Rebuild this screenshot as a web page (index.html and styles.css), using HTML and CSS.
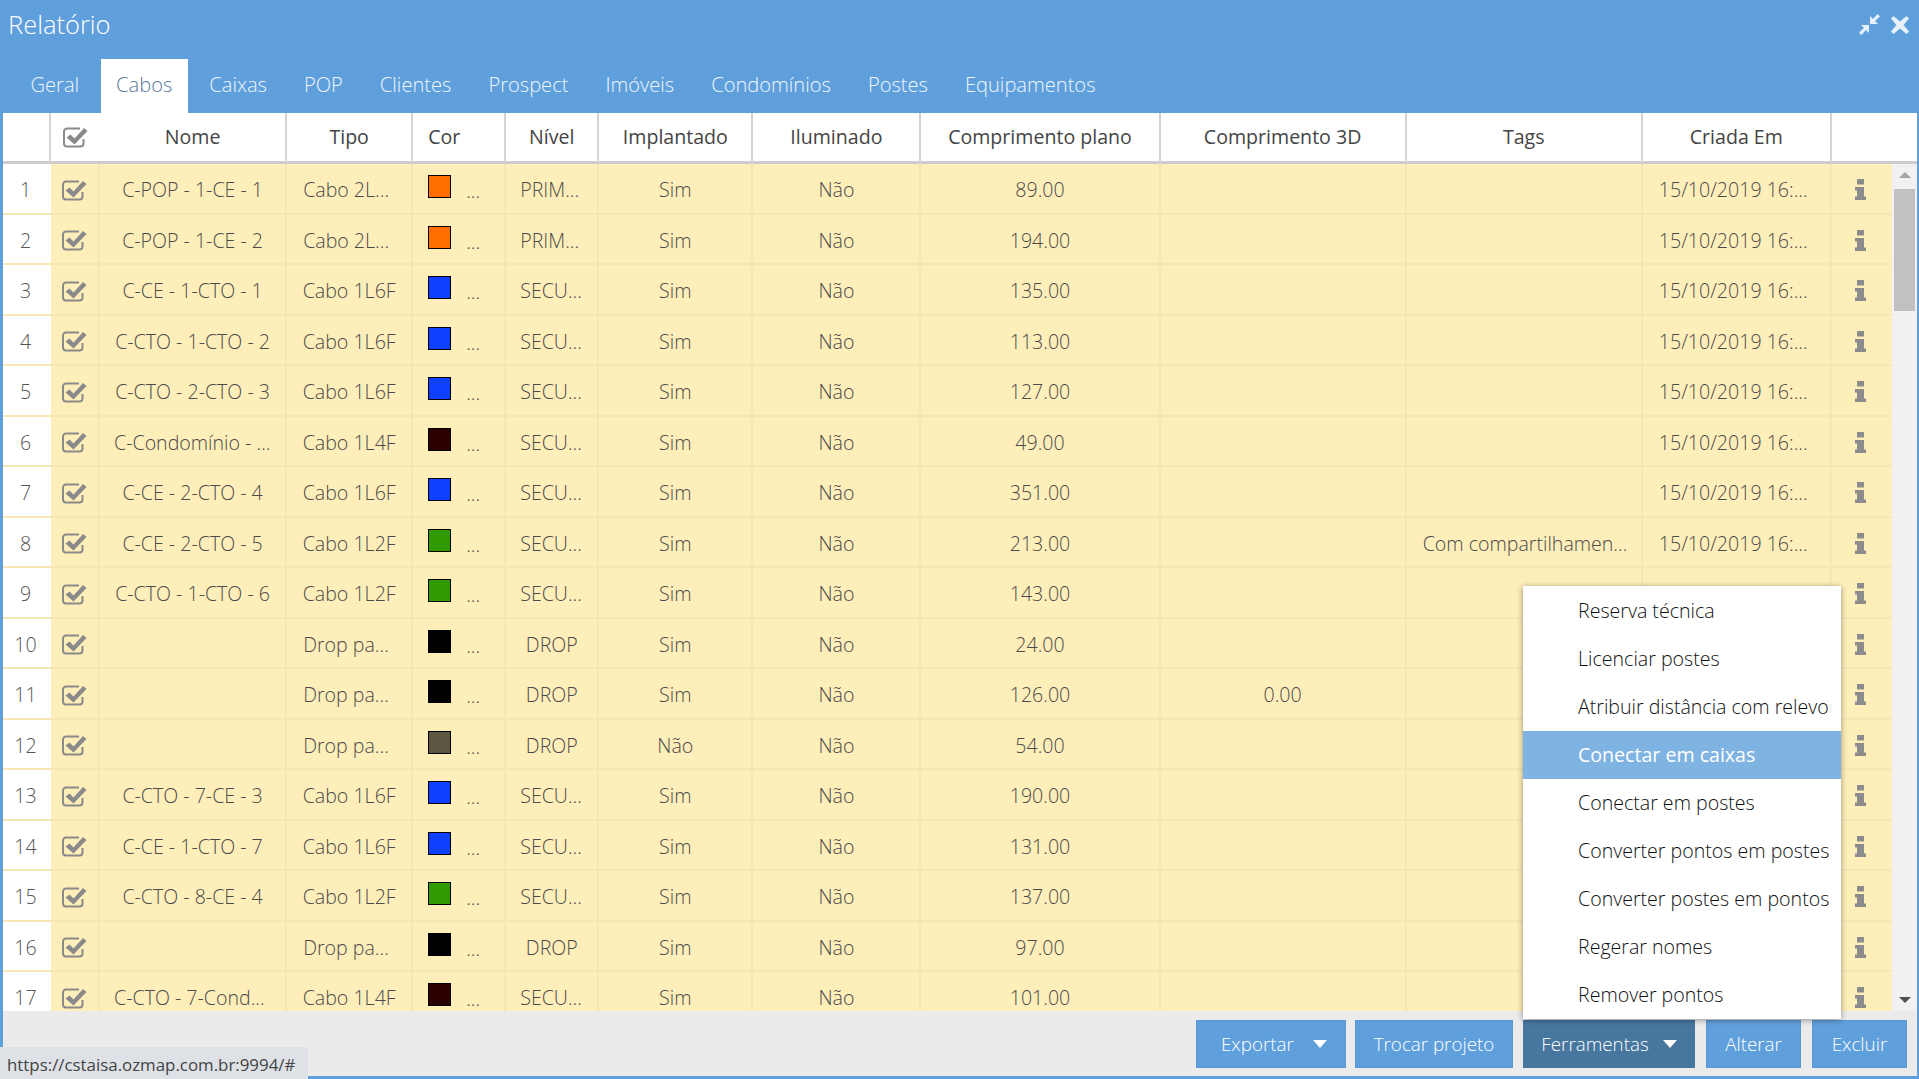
FILE: index.html
```html
<!DOCTYPE html>
<html lang="pt-BR">
<head>
<meta charset="utf-8">
<title>Relatório</title>
<link rel="stylesheet" href="styles.css">
</head>
<body>
<svg class="sprites" width="0" height="0">
  <symbol id="chk" viewBox="0 0 25 21">
    <path d="M20.500 12V16.500a3 3 0 0 1-3 3H4a3 3 0 0 1-3-3V4.500a3 3 0 0 1 3-3h13" fill="none" stroke="currentColor" stroke-width="2"/>
    <path d="M7.500 7.500l4 4L21 1l3.500 3L11.500 17.500 3.500 10.500z" fill="currentColor"/>
  </symbol>
  <symbol id="inf" viewBox="0 0 11 21">
    <path d="M2 0h7v5.500H2zM0 8h9v9.500h2V21H0v-3.500h2V11.500H0z" fill="currentColor"/>
  </symbol>
</svg>
<div class="window">
  <header class="titlebar">
    <h1 class="title">Relatório</h1>
    <div class="win-actions">
      <svg class="win-ico" viewBox="0 0 21 21"><path d="M10 11v8l-3-3-4.500 5L0 18.500 5 14 2 11zM11 10V2l3 3 4.500-5L21 2.500 16 7l3 3z" fill="currentColor"/></svg>
      <svg class="win-ico" viewBox="0 0 18 18"><path d="M2.500 0L9 5.500 15.500 0 18 2.500 12.500 9 18 15.500 15.500 18 9 12.500 2.500 18 0 15.500 5.500 9 0 2.500z" fill="currentColor"/></svg>
    </div>
  </header>
  <nav class="tabs">
    <a class="tab">Geral</a><a class="tab active">Cabos</a><a class="tab">Caixas</a><a class="tab">POP</a><a class="tab">Clientes</a><a class="tab">Prospect</a><a class="tab">Imóveis</a><a class="tab">Condomínios</a><a class="tab">Postes</a><a class="tab">Equipamentos</a>
  </nav>
  <table class="grid head">
    <colgroup><col class="c1"><col class="c2"><col class="c3"><col class="c4"><col class="c5"><col class="c6"><col class="c7"><col class="c8"><col class="c9"><col class="c10"><col class="c11"><col class="c12"><col class="c13h"></colgroup>
    <thead><tr>
      <th></th><th class="no-sep"><svg class="chk"><use href="#chk"/></svg></th><th>Nome</th><th>Tipo</th><th class="cor-h">Cor</th><th>Nível</th><th>Implantado</th><th>Iluminado</th><th>Comprimento plano</th><th>Comprimento 3D</th><th>Tags</th><th>Criada Em</th><th class="no-sep"></th>
    </tr></thead>
  </table>
  <div class="body-row">
    <div class="rows">
      <table class="grid">
        <colgroup><col class="c1"><col class="c2"><col class="c3"><col class="c4"><col class="c5"><col class="c6"><col class="c7"><col class="c8"><col class="c9"><col class="c10"><col class="c11"><col class="c12"><col class="c13"></colgroup>
        <tbody>
          <tr><td class="num">1</td><td><svg class="chk"><use href="#chk"/></svg></td><td>C-POP - 1-CE - 1</td><td class="cut">Cabo 2L...</td><td class="cor"><i class="sw orange"></i><span>...</span></td><td class="cut">PRIM...</td><td>Sim</td><td>Não</td><td>89.00</td><td></td><td></td><td class="cut">15/10/2019 16:...</td><td><svg class="inf"><use href="#inf"/></svg></td></tr>
          <tr><td class="num">2</td><td><svg class="chk"><use href="#chk"/></svg></td><td>C-POP - 1-CE - 2</td><td class="cut">Cabo 2L...</td><td class="cor"><i class="sw orange"></i><span>...</span></td><td class="cut">PRIM...</td><td>Sim</td><td>Não</td><td>194.00</td><td></td><td></td><td class="cut">15/10/2019 16:...</td><td><svg class="inf"><use href="#inf"/></svg></td></tr>
          <tr><td class="num">3</td><td><svg class="chk"><use href="#chk"/></svg></td><td>C-CE - 1-CTO - 1</td><td>Cabo 1L6F</td><td class="cor"><i class="sw blue"></i><span>...</span></td><td class="cut">SECU...</td><td>Sim</td><td>Não</td><td>135.00</td><td></td><td></td><td class="cut">15/10/2019 16:...</td><td><svg class="inf"><use href="#inf"/></svg></td></tr>
          <tr><td class="num">4</td><td><svg class="chk"><use href="#chk"/></svg></td><td>C-CTO - 1-CTO - 2</td><td>Cabo 1L6F</td><td class="cor"><i class="sw blue"></i><span>...</span></td><td class="cut">SECU...</td><td>Sim</td><td>Não</td><td>113.00</td><td></td><td></td><td class="cut">15/10/2019 16:...</td><td><svg class="inf"><use href="#inf"/></svg></td></tr>
          <tr><td class="num">5</td><td><svg class="chk"><use href="#chk"/></svg></td><td>C-CTO - 2-CTO - 3</td><td>Cabo 1L6F</td><td class="cor"><i class="sw blue"></i><span>...</span></td><td class="cut">SECU...</td><td>Sim</td><td>Não</td><td>127.00</td><td></td><td></td><td class="cut">15/10/2019 16:...</td><td><svg class="inf"><use href="#inf"/></svg></td></tr>
          <tr><td class="num">6</td><td><svg class="chk"><use href="#chk"/></svg></td><td class="cut">C-Condomínio - ...</td><td>Cabo 1L4F</td><td class="cor"><i class="sw wine"></i><span>...</span></td><td class="cut">SECU...</td><td>Sim</td><td>Não</td><td>49.00</td><td></td><td></td><td class="cut">15/10/2019 16:...</td><td><svg class="inf"><use href="#inf"/></svg></td></tr>
          <tr><td class="num">7</td><td><svg class="chk"><use href="#chk"/></svg></td><td>C-CE - 2-CTO - 4</td><td>Cabo 1L6F</td><td class="cor"><i class="sw blue"></i><span>...</span></td><td class="cut">SECU...</td><td>Sim</td><td>Não</td><td>351.00</td><td></td><td></td><td class="cut">15/10/2019 16:...</td><td><svg class="inf"><use href="#inf"/></svg></td></tr>
          <tr><td class="num">8</td><td><svg class="chk"><use href="#chk"/></svg></td><td>C-CE - 2-CTO - 5</td><td>Cabo 1L2F</td><td class="cor"><i class="sw green"></i><span>...</span></td><td class="cut">SECU...</td><td>Sim</td><td>Não</td><td>213.00</td><td></td><td class="cut">Com compartilhamen...</td><td class="cut">15/10/2019 16:...</td><td><svg class="inf"><use href="#inf"/></svg></td></tr>
          <tr><td class="num">9</td><td><svg class="chk"><use href="#chk"/></svg></td><td>C-CTO - 1-CTO - 6</td><td>Cabo 1L2F</td><td class="cor"><i class="sw green"></i><span>...</span></td><td class="cut">SECU...</td><td>Sim</td><td>Não</td><td>143.00</td><td></td><td></td><td></td><td><svg class="inf"><use href="#inf"/></svg></td></tr>
          <tr><td class="num">10</td><td><svg class="chk"><use href="#chk"/></svg></td><td></td><td class="cut">Drop pa...</td><td class="cor"><i class="sw black"></i><span>...</span></td><td>DROP</td><td>Sim</td><td>Não</td><td>24.00</td><td></td><td></td><td></td><td><svg class="inf"><use href="#inf"/></svg></td></tr>
          <tr><td class="num">11</td><td><svg class="chk"><use href="#chk"/></svg></td><td></td><td class="cut">Drop pa...</td><td class="cor"><i class="sw black"></i><span>...</span></td><td>DROP</td><td>Sim</td><td>Não</td><td>126.00</td><td>0.00</td><td></td><td></td><td><svg class="inf"><use href="#inf"/></svg></td></tr>
          <tr><td class="num">12</td><td><svg class="chk"><use href="#chk"/></svg></td><td></td><td class="cut">Drop pa...</td><td class="cor"><i class="sw olive"></i><span>...</span></td><td>DROP</td><td>Não</td><td>Não</td><td>54.00</td><td></td><td></td><td></td><td><svg class="inf"><use href="#inf"/></svg></td></tr>
          <tr><td class="num">13</td><td><svg class="chk"><use href="#chk"/></svg></td><td>C-CTO - 7-CE - 3</td><td>Cabo 1L6F</td><td class="cor"><i class="sw blue"></i><span>...</span></td><td class="cut">SECU...</td><td>Sim</td><td>Não</td><td>190.00</td><td></td><td></td><td></td><td><svg class="inf"><use href="#inf"/></svg></td></tr>
          <tr><td class="num">14</td><td><svg class="chk"><use href="#chk"/></svg></td><td>C-CE - 1-CTO - 7</td><td>Cabo 1L6F</td><td class="cor"><i class="sw blue"></i><span>...</span></td><td class="cut">SECU...</td><td>Sim</td><td>Não</td><td>131.00</td><td></td><td></td><td></td><td><svg class="inf"><use href="#inf"/></svg></td></tr>
          <tr><td class="num">15</td><td><svg class="chk"><use href="#chk"/></svg></td><td>C-CTO - 8-CE - 4</td><td>Cabo 1L2F</td><td class="cor"><i class="sw green"></i><span>...</span></td><td class="cut">SECU...</td><td>Sim</td><td>Não</td><td>137.00</td><td></td><td></td><td></td><td><svg class="inf"><use href="#inf"/></svg></td></tr>
          <tr><td class="num">16</td><td><svg class="chk"><use href="#chk"/></svg></td><td></td><td class="cut">Drop pa...</td><td class="cor"><i class="sw black"></i><span>...</span></td><td>DROP</td><td>Sim</td><td>Não</td><td>97.00</td><td></td><td></td><td></td><td><svg class="inf"><use href="#inf"/></svg></td></tr>
          <tr><td class="num">17</td><td><svg class="chk"><use href="#chk"/></svg></td><td class="cut">C-CTO - 7-Cond...</td><td>Cabo 1L4F</td><td class="cor"><i class="sw wine"></i><span>...</span></td><td class="cut">SECU...</td><td>Sim</td><td>Não</td><td>101.00</td><td></td><td></td><td></td><td><svg class="inf"><use href="#inf"/></svg></td></tr>
        </tbody>
      </table>
    </div>
    <div class="scrollbar">
      <i class="arrow up"></i>
      <div class="thumb"></div>
      <div class="track"></div>
      <i class="arrow down"></i>
    </div>
  </div>
  <footer class="actions">
    <button class="btn exp">Exportar<i class="caret wide"></i></button>
    <button class="btn plain">Trocar projeto</button>
    <button class="btn open">Ferramentas<i class="caret"></i></button>
    <button class="btn alter">Alterar</button>
    <button class="btn excl">Excluir</button>
  </footer>
  <ul class="menu">
    <li>Reserva técnica</li>
    <li>Licenciar postes</li>
    <li>Atribuir distância com relevo</li>
    <li class="hover">Conectar em caixas</li>
    <li>Conectar em postes</li>
    <li>Converter pontos em postes</li>
    <li>Converter postes em pontos</li>
    <li>Regerar nomes</li>
    <li>Remover pontos</li>
  </ul>
  <div class="status">https://cstaisa.ozmap.com.br:9994/#</div>
</div>
</body>
</html>
```
FILE: styles.css
```css
* { box-sizing: border-box; }
html, body { margin: 0; height: 100%; overflow: hidden; }
body { font-family: "Open Sans", "Liberation Sans", sans-serif; font-size: 19.58px; color: #555; }
.sprites { position: absolute; }
.window {
  position: relative; width: 1919px; height: 1079px; background: #5fa0dc;
  padding: 0 2px 3px 3px; display: flex; flex-direction: column; overflow: hidden;
}
.titlebar { height: 59px; flex: none; display: flex; justify-content: space-between; align-items: flex-start; margin: 0 -2px 0 -3px; padding: 7px 10px 0 8px; }
.title { margin: 0; font-size: 25.500px; font-weight: 300; line-height: 34px; color: #fff; }
.win-actions { display: flex; gap: 11px; align-items: center; padding-top: 7px; color: #e8f1fa; }
.win-ico { width: 21px; height: 21px; display: block; }
.win-ico + .win-ico { width: 18px; height: 18px; }
.tabs { height: 54px; flex: none; display: flex; gap: 6px; padding-left: 12px; }
.tab { padding: 0 15.500px; line-height: 52.500px; font-size: 20.100px; font-weight: 300; color: #f0f5fb; }
.tab.active { background: #fff; color: #5b7a99; }
.grid { width: 100%; border-collapse: separate; border-spacing: 0; table-layout: fixed; }
.c1 { width: 48px; } .c2 { width: 49px; } .c3 { width: 187px; } .c4 { width: 126px; } .c5 { width: 93px; } .c6 { width: 93px; }
.c7 { width: 154px; } .c8 { width: 168px; } .c9 { width: 239px; } .c10 { width: 246px; } .c11 { width: 236px; } .c12 { width: 189px; }
.c13 { width: 60px; } .c13h { width: 85px; }
.head { background: #fff; flex: none; }
.head th { height: 51px; padding: 0 0 1px; font-size: 19.58px; font-weight: 400; color: #444; border-right: 2px solid #d4d4d4; border-bottom: 3px solid #ccc; text-align: center; }
.head th.no-sep { border-right: 0; }
.head th:nth-child(2) { text-align: left; padding-left: 12px; }
.head th.cor-h { text-align: left; padding-left: 15px; }
.body-row { flex: 1; min-height: 0; display: flex; }
.rows { flex: 1; min-width: 0; overflow: hidden; }
.rows td { height: 50.5px; padding: 2.500px 0 0; background: #feeeb9; border-right: 2px solid #f5e6b4; border-bottom: 2px solid #f5e6b4; font-weight: 300; text-align: center; white-space: nowrap; overflow: hidden; color: #4a4a4a; }
.rows td:last-child { border-right: 0; padding-right: 2px; }
.rows td.num { background: #fff; color: #555; border-right: 0; padding-right: 3px; }
.rows td.cut { text-align: left; padding-left: 16px; }
.rows td.cut:nth-child(3), .rows td.cut:nth-child(6) { padding-left: 14px; }
.rows td.cor { text-align: left; padding-left: 15px; }
.sw { display: inline-block; width: 23px; height: 23px; border: 1px solid #000; vertical-align: 0; }
.cor span { display: inline-block; line-height: 1; margin-left: 15px; }
.orange { background: #ff6f00; } .blue { background: #0f40ff; } .wine { background: #2d0000; } .green { background: #2f9b00; } .black { background: #000; } .olive { background: #5c5540; }
.chk { width: 25px; height: 21px; color: #8a8a8a; display: inline-block; vertical-align: middle; margin-top: -3px; }
.inf { width: 11px; height: 21px; color: #8c8c8c; display: inline-block; vertical-align: middle; margin-top: -4px; }
.scrollbar { width: 25px; flex: none; background: #f1f1f1; display: flex; flex-direction: column; align-items: center; padding: 8px 0; }
.arrow { width: 0; height: 0; border-left: 6px solid transparent; border-right: 6px solid transparent; flex: none; }
.arrow.up { border-bottom: 6px solid #a3a3a3; margin-bottom: 11px; }
.arrow.down { border-top: 6px solid #505050; }
.thumb { width: 21px; height: 122px; background: #c1c1c1; flex: none; }
.track { flex: 1; }
.actions { height: 65px; flex: none; background: #ebebeb; display: flex; justify-content: flex-end; gap: 9px; padding: 9px 10px 8px 0; }
.btn { font: 300 18.8px "Open Sans", "Liberation Sans", sans-serif; color: #fff; background: #5fa0dc; border: 1px solid #5a99d4; height: 48px; padding: 0; display: flex; align-items: center; width: 150px; justify-content: center; }
.btn.exp { justify-content: flex-start; padding-left: 24px; }
.btn.plain { width: 158px; }
.btn.open { width: 172px; margin-left: 1px; background: #47769f; border-color: #47769f; }
.btn.alter, .btn.excl { width: 95px; margin-left: 2px; }
.caret { width: 0; height: 0; border-left: 7px solid transparent; border-right: 7px solid transparent; border-top: 8px solid #fff; margin-left: 14px; }
.caret.wide { margin-left: 19px; }
.menu { position: absolute; left: 1523px; top: 586px; width: 318px; height: 433px; margin: 0; padding: 1px 0 0; list-style: none; background: #fff; box-shadow: 0 1px 6px rgba(0,0,0,.4); }
.menu li { height: 48px; line-height: 48px; padding-left: 55px; font-size: 19.58px; font-weight: 300; color: #111; white-space: nowrap; }
.menu li.hover { background: #7fb3e2; color: #fff; font-weight: 400; }
.status { position: absolute; left: 0; bottom: 0; width: 308px; height: 32px; background: #dee1e6; border-top-right-radius: 5px; font-size: 16.860px; line-height: 35px; padding-left: 7px; color: #444; }
```
